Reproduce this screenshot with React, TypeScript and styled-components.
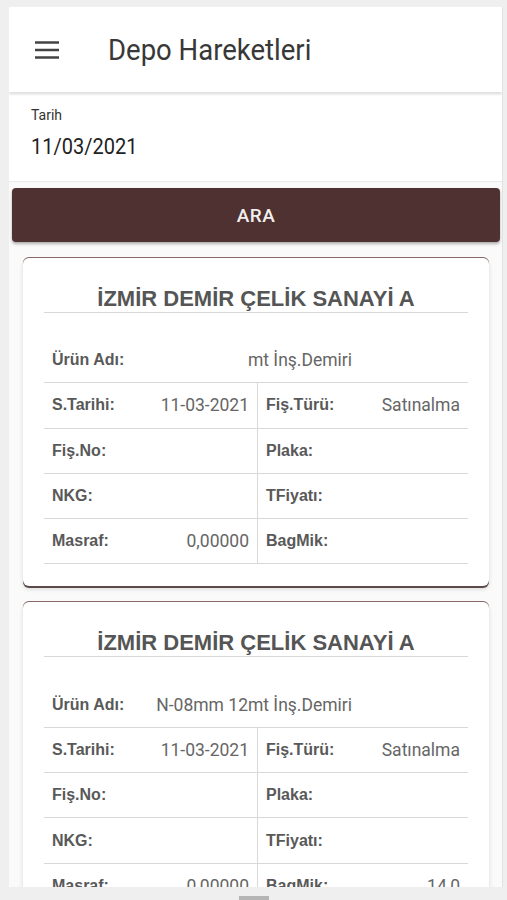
import React from "react";
import styled, { createGlobalStyle } from "styled-components";

const GlobalStyle = createGlobalStyle`
  html, body {
    margin: 0;
    padding: 0;
    background: #efefef;
    font-family: Roboto, "Liberation Sans", sans-serif;
  }
`;

const Screen = styled.div`
  width: 507px;
  height: 900px;
  overflow: hidden;
  display: flex;
  flex-direction: column;
  background: #efefef;
`;

const Panel = styled.div`
  margin: 7px 4px 0 9px;
  height: 880px;
  overflow: hidden;
  background: #fafafa;
  display: flex;
  flex-direction: column;
  border-right: 1px solid #e2e2e2;
`;

const Bottom = styled.div`
  flex: 1;
  display: flex;
  justify-content: center;
  align-items: flex-end;
`;

const HomeBar = styled.div`
  width: 30px;
  height: 4px;
  background: #b5b5b5;
`;

const Toolbar = styled.header`
  height: 85px;
  flex-shrink: 0;
  background: #fff;
  display: flex;
  align-items: center;
  padding-left: 25px;
  gap: 48px;
  box-shadow: 0 2px 3px rgba(0, 0, 0, 0.12);
  position: relative;
  z-index: 1;
`;

const Title = styled.h1`
  margin: 0;
  font-family: Roboto, sans-serif;
  font-weight: 400;
  font-size: 27.5px;
  color: #383838;
  transform: scaleY(1.08);
`;

const Form = styled.div`
  margin-top: 3px;
  height: 86px;
  flex-shrink: 0;
  box-sizing: border-box;
  background: #fff;
  padding: 12px 22px 0;
  display: flex;
  flex-direction: column;
  box-shadow: 0 1px 1px rgba(0, 0, 0, 0.06);
`;

const FieldLabel = styled.label`
  font-size: 14px;
  color: #333;
  line-height: 16px;
`;

const FieldValue = styled.div`
  margin-top: 10px;
  font-size: 20px;
  color: #222;
  line-height: 24px;
  transform: scaleY(1.1);
  transform-origin: left top;
`;

const SearchButton = styled.button`
  margin: 7px 2px 0 3px;
  height: 54px;
  flex-shrink: 0;
  border: 0;
  border-radius: 4px;
  background: #4e3130;
  color: #f2eeee;
  font-family: Roboto, sans-serif;
  font-size: 19px;
  font-weight: 500;
  letter-spacing: 0.4px;
  box-shadow: 0 2px 3px rgba(0, 0, 0, 0.3);
`;

const List = styled.div`
  display: flex;
  flex-direction: column;
  gap: 16px;
  padding: 16px 13px 0 14px;
`;

const Card = styled.section`
  background: #fff;
  border-radius: 6px;
  padding: 27px 21px 22px;
  box-shadow: 0 -1px 0 #8a6767, 0 2px 0 #5c4a4a, 0 0 0 1px #ececec, 0 3px 4px rgba(0, 0, 0, 0.15);
`;

const CardTitle = styled.h2`
  margin: 0;
  font-family: "Liberation Sans", Arial, sans-serif;
  font-weight: 700;
  font-size: 22px;
  line-height: 27px;
  color: #555;
  text-align: center;
  border-bottom: 1px solid #d8d8d8;
`;

const Table = styled.div`
  margin-top: 25px;
  display: grid;
  grid-template-columns: 214px 1fr;
`;

const Cell = styled.div<{ $wide?: boolean; $divider?: boolean }>`
  grid-column: ${(p) => (p.$wide ? "1 / span 2" : "auto")};
  height: 44.3px;
  border-bottom: 1px solid #d8d8d8;
  border-right: ${(p) => (p.$divider ? "1px solid #d8d8d8" : "0")};
  display: flex;
  align-items: center;
  justify-content: space-between;
  padding: 0 8px;
  box-sizing: content-box;
`;

const Label = styled.span`
  font-family: "Liberation Sans", Arial, sans-serif;
  font-weight: 700;
  font-size: 16px;
  color: #595959;
`;

const Value = styled.span<{ $end?: number }>`
  font-family: Roboto, sans-serif;
  font-size: 17.5px;
  color: #666;
  ${(p) => (p.$end ? `margin-right: ${p.$end}px;` : "")}
`;

type Row = [string, string];

interface Movement {
  firm: string;
  product: string;
  rows: [Row, Row][];
}

const data: Movement[] = [
  {
    firm: "İZMİR DEMİR ÇELİK SANAYİ A",
    product: "mt İnş.Demiri",
    rows: [
      [["S.Tarihi:", "11-03-2021"], ["Fiş.Türü:", "Satınalma"]],
      [["Fiş.No:", ""], ["Plaka:", ""]],
      [["NKG:", ""], ["TFiyatı:", ""]],
      [["Masraf:", "0,00000"], ["BagMik:", ""]],
    ],
  },
  {
    firm: "İZMİR DEMİR ÇELİK SANAYİ A",
    product: "N-08mm 12mt İnş.Demiri",
    rows: [
      [["S.Tarihi:", "11-03-2021"], ["Fiş.Türü:", "Satınalma"]],
      [["Fiş.No:", ""], ["Plaka:", ""]],
      [["NKG:", ""], ["TFiyatı:", ""]],
      [["Masraf:", "0,00000"], ["BagMik:", "14,0"]],
    ],
  },
];

const MenuIcon = () => (
  <svg width="26" height="20" viewBox="0 0 26 20" fill="none">
    <path d="M1 2.5h24M1 10h24M1 17.5h24" stroke="#444" strokeWidth="2.6" />
  </svg>
);

const MovementCard = ({ item }: { item: Movement }) => (
  <Card>
    <CardTitle>{item.firm}</CardTitle>
    <Table>
      <Cell $wide>
        <Label>Ürün Adı:</Label>
        <Value $end={108}>{item.product}</Value>
      </Cell>
      {item.rows.map(([left, right]) => (
        <React.Fragment key={left[0]}>
          <Cell $divider>
            <Label>{left[0]}</Label>
            <Value>{left[1]}</Value>
          </Cell>
          <Cell>
            <Label>{right[0]}</Label>
            <Value>{right[1]}</Value>
          </Cell>
        </React.Fragment>
      ))}
    </Table>
  </Card>
);

export default function App() {
  return (
    <Screen>
      <GlobalStyle />
      <Panel>
        <Toolbar>
          <MenuIcon />
          <Title>Depo Hareketleri</Title>
        </Toolbar>
        <Form>
          <FieldLabel>Tarih</FieldLabel>
          <FieldValue>11/03/2021</FieldValue>
        </Form>
        <SearchButton>ARA</SearchButton>
        <List>
          {data.map((item, i) => (
            <MovementCard key={i} item={item} />
          ))}
        </List>
      </Panel>
      <Bottom>
        <HomeBar />
      </Bottom>
    </Screen>
  );
}
